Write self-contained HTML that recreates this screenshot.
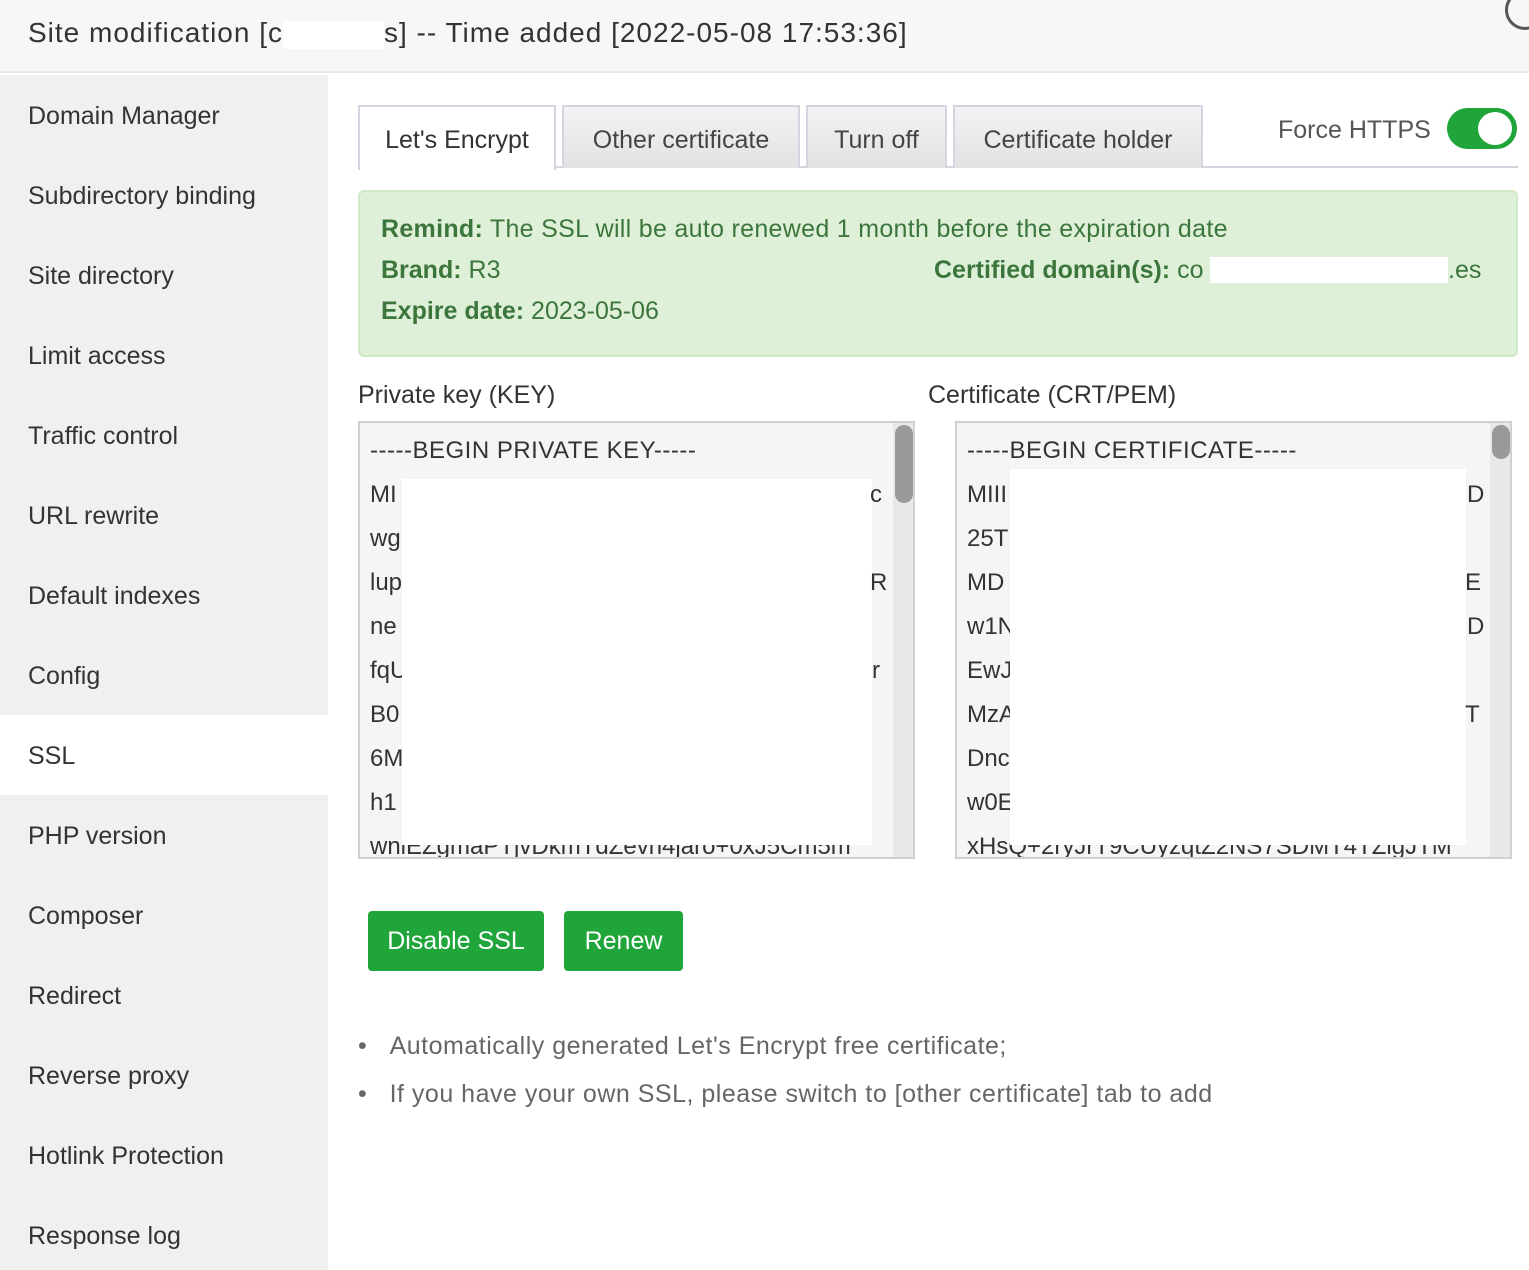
<!DOCTYPE html>
<html><head><meta charset="utf-8"><style>
*{margin:0;padding:0;box-sizing:border-box}
body{width:1529px;height:1270px;overflow:hidden;background:#fff;font-family:"Liberation Sans",sans-serif;color:#333;position:relative}
.a{position:absolute;white-space:nowrap}
#hd{left:0;top:0;width:1529px;height:73px;background:#f7f7f7;border-bottom:2px solid #e8e8e8}
#sb{left:0;top:75px;width:328px;height:1195px;background:#f0f0f0}
.it{position:absolute;left:28px;font-size:25px;color:#333}
.tab{position:absolute;top:105px;height:63px;border:2px solid #d5d5e0;border-bottom:none;background:linear-gradient(#f3f3f3,#e2e2e2);font-size:25px;color:#444;text-align:center;line-height:66px}
.ta{position:absolute;top:421px;height:438px;border:2px solid #d0d0d0;background:#f5f5f5;font-size:24px;color:#333;overflow:hidden}
.ta div{position:absolute;left:10px;white-space:nowrap}
.btn{position:absolute;top:911px;height:60px;background:#20a53a;border-radius:4px;color:#fff;font-size:25px;text-align:center;line-height:60px}
.g{color:#3c763d}
</style></head><body>
<div class="a" id="hd"></div>
<div class="a" style="left:28px;top:17px;font-size:28px;color:#333;letter-spacing:1px">Site modification [c<span style="display:inline-block;width:101px;height:28px;background:#fff;vertical-align:middle"></span>s] -- Time added [2022-05-08 17:53:36]</div>
<div class="a" style="left:1505px;top:-10px;width:40px;height:40px;border-radius:50%;border:3px solid #555"></div>
<div class="a" id="sb"></div>
<div class="a" style="left:0;top:715px;width:328px;height:80px;background:#fff"></div>
<div class="it" style="top:102px">Domain Manager</div>
<div class="it" style="top:182px">Subdirectory binding</div>
<div class="it" style="top:262px">Site directory</div>
<div class="it" style="top:342px">Limit access</div>
<div class="it" style="top:422px">Traffic control</div>
<div class="it" style="top:502px">URL rewrite</div>
<div class="it" style="top:582px">Default indexes</div>
<div class="it" style="top:662px">Config</div>
<div class="it" style="top:742px">SSL</div>
<div class="it" style="top:822px">PHP version</div>
<div class="it" style="top:902px">Composer</div>
<div class="it" style="top:982px">Redirect</div>
<div class="it" style="top:1062px">Reverse proxy</div>
<div class="it" style="top:1142px">Hotlink Protection</div>
<div class="it" style="top:1222px">Response log</div>

<div class="a" style="left:358px;top:166px;width:1160px;height:2px;background:#d5d5e0"></div>
<div class="tab" style="left:358px;width:198px;background:#fff;height:65px;color:#333">Let's Encrypt</div>
<div class="tab" style="left:562px;width:238px">Other certificate</div>
<div class="tab" style="left:806px;width:141px">Turn off</div>
<div class="tab" style="left:953px;width:250px">Certificate holder</div>
<div class="a" style="left:1278px;top:116px;font-size:25px;color:#555">Force HTTPS</div>
<div class="a" style="left:1447px;top:108px;width:70px;height:41px;border-radius:21px;background:#20a53a"></div>
<div class="a" style="left:1478px;top:112px;width:34px;height:33px;border-radius:50%;background:#fff"></div>

<div class="a" style="left:358px;top:190px;width:1160px;height:167px;background:#dff0d8;border:2px solid #d0e9c6;border-radius:6px"></div>
<div class="a g" style="left:381px;top:215px;font-size:25px;letter-spacing:0.3px"><b>Remind:</b> The SSL will be auto renewed 1 month before the expiration date</div>
<div class="a g" style="left:381px;top:256px;font-size:25px"><b>Brand:</b> R3</div>
<div class="a g" style="left:934px;top:256px;font-size:25px"><b>Certified domain(s):</b> co</div>
<div class="a" style="left:1210px;top:257px;width:238px;height:26px;background:#fff"></div>
<div class="a g" style="left:1448px;top:256px;font-size:25px">.es</div>
<div class="a g" style="left:381px;top:297px;font-size:25px"><b>Expire date:</b> 2023-05-06</div>

<div class="a" style="left:358px;top:381px;font-size:25px">Private key (KEY)</div>
<div class="a" style="left:928px;top:381px;font-size:25px">Certificate (CRT/PEM)</div>

<div class="ta" style="left:358px;width:557px">
<div style="top:14px;letter-spacing:0.5px">-----BEGIN PRIVATE KEY-----</div>
<div style="top:58px">MI</div><div style="top:102px">wg</div><div style="top:146px">lup</div><div style="top:190px">ne</div><div style="top:234px">fqU</div><div style="top:278px">B0</div><div style="top:322px">6M</div><div style="top:366px">h1</div><div style="top:410px">wnlEZgmaPTjvDkmTdZevn4jaro+0xJ5Cm5m</div>
<div style="left:42px;top:56px;width:470px;height:366px;background:#fff"></div>
<div style="left:510px;top:58px">c</div><div style="left:510px;top:146px">R</div><div style="left:512px;top:234px">r</div>
<div style="left:533px;top:0;width:22px;height:434px;background:#e8e8e8"></div>
<div style="left:535px;top:2px;width:18px;height:78px;border-radius:9px;background:#999"></div>
</div>
<div class="ta" style="left:955px;width:557px">
<div style="top:14px;letter-spacing:0.5px">-----BEGIN CERTIFICATE-----</div>
<div style="top:58px">MIII</div><div style="top:102px">25T</div><div style="top:146px">MD</div><div style="top:190px">w1N</div><div style="top:234px">EwJ</div><div style="top:278px">MzA</div><div style="top:322px">Dnc</div><div style="top:366px">w0E</div><div style="top:410px">xHsQ+2ryJrT9CUyzqtZ2NS7SDMT4TZigJTM</div>
<div style="left:53px;top:46px;width:456px;height:376px;background:#fff"></div>
<div style="left:510px;top:58px">D</div><div style="left:508px;top:146px">E</div><div style="left:510px;top:190px">D</div><div style="left:508px;top:278px">T</div>
<div style="left:533px;top:0;width:22px;height:434px;background:#e8e8e8"></div>
<div style="left:535px;top:2px;width:18px;height:34px;border-radius:9px;background:#999"></div>
</div>

<div class="btn" style="left:368px;width:176px">Disable SSL</div>
<div class="btn" style="left:564px;width:119px">Renew</div>

<div class="a" style="left:358px;top:1032px;font-size:25px;color:#666;letter-spacing:0.5px">•&nbsp;&nbsp;&nbsp;Automatically generated Let's Encrypt free certificate;</div>
<div class="a" style="left:358px;top:1080px;font-size:25px;color:#666;letter-spacing:0.5px">•&nbsp;&nbsp;&nbsp;If you have your own SSL, please switch to [other certificate] tab to add</div>
</body></html>
